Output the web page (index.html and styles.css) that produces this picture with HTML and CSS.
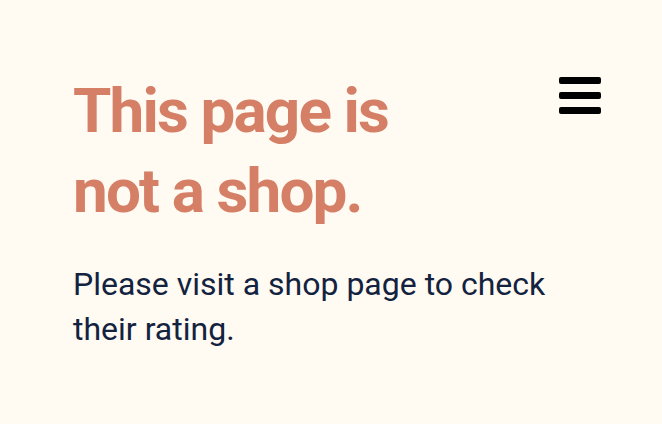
FILE: index.html
```html
<!DOCTYPE html>
<html lang="en">
<head>
<meta charset="utf-8">
<title>Not a shop</title>
<link rel="stylesheet" href="styles.css">
</head>
<body>
<main class="page">
  <div class="content">
    <h1 class="title">This page is<br>not a shop.</h1>
    <p class="text">Please visit a shop page to check their rating.</p>
  </div>
  <button class="menu" aria-label="Menu">
    <span class="bar"></span>
    <span class="bar"></span>
    <span class="bar"></span>
  </button>
</main>
</body>
</html>
```

FILE: styles.css
```css
html, body {
  margin: 0;
  padding: 0;
  background: #fffbf2;
}
body {
  font-family: Roboto, "Liberation Sans", sans-serif;
  width: 662px;
  height: 424px;
  overflow: hidden;
}
.page {
  display: flex;
  justify-content: space-between;
  align-items: flex-start;
  padding: 71px 61px 0 73px;
}
.content {
  width: 480px;
}
.title {
  margin: 0;
  font-size: 62px;
  line-height: 80px;
  font-weight: 700;
  letter-spacing: -0.03em;
  color: #d47f66;
}
.text {
  margin: 31px 0 0;
  font-size: 32px;
  line-height: 45px;
  font-weight: 400;
  color: #13223f;
}
.menu {
  margin-top: 6px;
  padding: 0;
  border: 0;
  background: none;
  display: flex;
  flex-direction: column;
  gap: 8px;
  width: 42px;
}
.bar {
  display: block;
  width: 42px;
  height: 7px;
  border-radius: 2px;
  background: #000;
}
```
